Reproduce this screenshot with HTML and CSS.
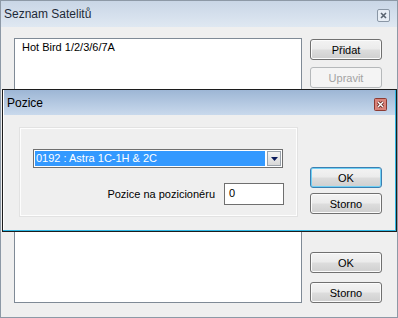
FILE: index.html
```html
<!DOCTYPE html>
<html lang="cs">
	<head>
		<meta charset="UTF-8" />
		<title>Seznam Satelitů</title>
		<link rel="stylesheet" href="styles.css">
	</head>
	<body>
		<div class="window">
			<div class="titlebar">
				<span class="title">Seznam Satelitů</span>
				<span class="close">
					<svg width="13" height="13" viewBox="0 0 13 13">
						<rect x="0.5" y="0.5" width="12" height="12" rx="1.5" fill="#e8eef5" stroke="#8a97a6" />
						<path d="M4 4 L9 9 M9 4 L4 9" stroke="#5a6470" stroke-width="1.6" />
					</svg>
				</span>
			</div>
			<div class="body">
				<div class="listbox">
					<div class="item">Hot Bird 1/2/3/6/7A</div>
				</div>
				<div class="side">
					<div class="btn-group top">
						<button class="btn">Přidat</button>
						<button class="btn" disabled>Upravit</button>
					</div>
					<div class="btn-group bottom">
						<button class="btn">OK</button>
						<button class="btn">Storno</button>
					</div>
				</div>
			</div>

			<div class="dialog">
				<div class="dialog-titlebar">
					<span class="title">Pozice</span>
					<span class="close red">
						<svg width="13" height="13" viewBox="0 0 13 13">
							<rect x="0.5" y="0.5" width="12" height="12" rx="1" fill="#d9837a" stroke="#8c3b33" />
							<path d="M4 4 L9 9 M9 4 L4 9" stroke="#5a1f1a" stroke-width="3" />
							<path d="M4 4 L9 9 M9 4 L4 9" stroke="#ffffff" stroke-width="1.4" />
						</svg>
					</span>
				</div>
				<div class="dialog-body">
					<div class="groupbox">
						<div class="combo">
							<span class="combo-value">0192 : Astra 1C-1H &amp; 2C</span>
							<span class="combo-arrow">
								<svg width="7" height="4" viewBox="0 0 7 4"><path d="M0 0 H7 L3.5 4 Z" fill="#0a1a5c" /></svg>
							</span>
						</div>
						<div class="field-row">
							<label class="field-label">Pozice na pozicionéru</label>
							<div class="textbox">0</div>
						</div>
					</div>
					<div class="dialog-buttons">
						<button class="btn focused">OK</button>
						<button class="btn">Storno</button>
					</div>
				</div>
			</div>
		</div>
	</body>
</html>
```

FILE: styles.css
```css
*,
*::before,
*::after {
	box-sizing: border-box;
}
body {
	margin: 0;
	background-color: #ffffff;
	font-family: 'Liberation Sans', Arial, sans-serif;
	font-size: 11px;
	color: #000000;
}
.window {
	position: relative;
	width: 398px;
	height: 318px;
	border: 1px solid #8d99a6;
	background-color: #efefef;
}
.titlebar {
	display: flex;
	align-items: center;
	justify-content: space-between;
	height: 26px;
	padding: 0 7px 0 3px;
	background: linear-gradient(#c9d6e6, #dfe8f2);
}
.title {
	font-size: 12px;
	color: #1e2a38;
}
.close {
	display: flex;
	margin-top: 3px;
}
.body {
	display: flex;
	padding: 11px 0 0 13px;
}
.listbox {
	width: 288px;
	height: 265px;
	border: 1px solid #7f8a96;
	background-color: #ffffff;
	padding: 2px 7px;
}
.item {
	line-height: 13px;
}
.side {
	display: flex;
	flex-direction: column;
	justify-content: space-between;
	margin-left: 8px;
	padding-top: 1px;
	height: 265px;
}
.btn-group {
	display: flex;
	flex-direction: column;
}
.btn-group.top {
	gap: 7px;
}
.btn-group.bottom {
	gap: 9px;
}
.btn {
	width: 72px;
	height: 21px;
	padding: 0;
	font-family: inherit;
	font-size: 11px;
	color: #000000;
	border: 1px solid #707070;
	border-radius: 3px;
	background: linear-gradient(#f3f3f3 0%, #ebebeb 48%, #dddddd 52%, #cfcfcf 100%);
	box-shadow: inset 0 0 0 1px #fbfbfb;
}
.btn:disabled {
	color: #a3a3a3;
	border-color: #b5b8ba;
	background: #f4f4f4;
	box-shadow: none;
}
.btn.focused {
	border-color: #3c7fb1;
	box-shadow: inset 0 0 0 1px #6fd0f5;
}
.dialog {
	position: absolute;
	left: 1px;
	top: 88px;
	width: 395px;
	height: 143px;
	border: 1px solid #1c1c1c;
	background-color: #efefef;
	box-shadow: inset -1px -1px 0 #2fb7e3, inset 1px 1px 0 #ffffff;
	padding: 0 1px 1px 1px;
}
.dialog-titlebar {
	display: flex;
	align-items: center;
	justify-content: space-between;
	height: 25px;
	padding: 0 8px 0 3px;
	background: linear-gradient(#9db6d5, #c9d9ec);
}
.dialog-titlebar .title {
	color: #000000;
}
.dialog-body {
	display: flex;
	padding: 13px 0 0 16px;
}
.groupbox {
	width: 277px;
	height: 88px;
	border: 1px solid #fdfdfd;
	box-shadow: 0 0 0 1px #e2e2e2;
	padding: 20px 12px 0 12px;
}
.combo {
	display: flex;
	align-items: center;
	width: 250px;
	height: 19px;
	border: 1px solid #6f6f6f;
	background-color: #ffffff;
	padding: 1px;
}
.combo-value {
	flex: 1;
	height: 100%;
	background-color: #3399ff;
	color: #ffffff;
	line-height: 15px;
	padding-left: 1px;
}
.combo-arrow {
	display: flex;
	align-items: center;
	justify-content: center;
	width: 14px;
	height: 15px;
	margin-left: 2px;
	border: 1px solid #9aa2ab;
	background: linear-gradient(#f4f4f4, #d8d8d8);
}
.field-row {
	display: flex;
	align-items: center;
	justify-content: flex-end;
	margin-top: 15px;
	gap: 9px;
}
.field-label {
	font-size: 11px;
}
.textbox {
	width: 60px;
	height: 22px;
	border: 1px solid #6f6f6f;
	background-color: #ffffff;
	padding: 2px 4px;
	line-height: 14px;
}
.dialog-buttons {
	display: flex;
	flex-direction: column;
	gap: 5px;
	margin-left: 13px;
	padding-top: 39px;
}
```
